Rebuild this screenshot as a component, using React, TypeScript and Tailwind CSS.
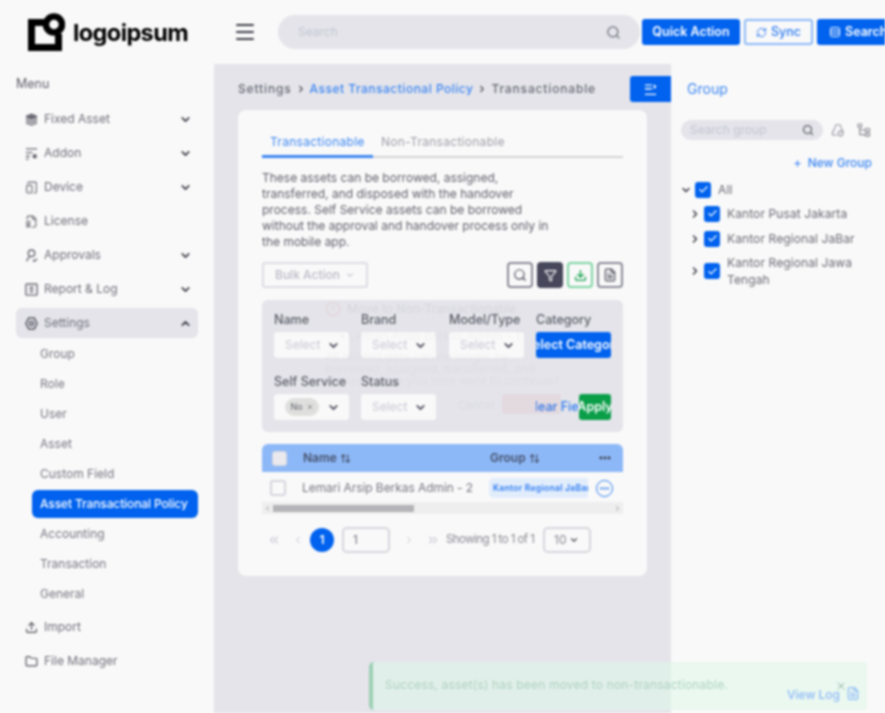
import React from 'react';
import {
  ChevronDown, ChevronUp, ChevronRight, ChevronLeft, ChevronsLeft, ChevronsRight, Check, Search, Menu, RefreshCw,
  TabletSmartphone, FileBadge, Upload, Folder, Filter, Download, FileText,
  MoreHorizontal, X, Plus, ArrowUpDown, Rows3, CircleAlert,
} from 'lucide-react';

type IconProps = { className?: string };

const StackIcon = ({ className }: IconProps) => (
  <svg viewBox="0 0 14 14" className={className} fill="currentColor">
    <path d="M7 .5 13 3v2L7 7.5 1 5V3Z" />
    <path d="M1 6.2 7 8.8l6-2.6v2L7 10.8 1 8.2Z" />
    <path d="M1 9.4l6 2.6 6-2.6v1.8L7 13.7 1 11.2Z" />
  </svg>
);

const AddonIcon = ({ className }: IconProps) => (
  <svg viewBox="0 0 14 14" className={className} fill="none" stroke="currentColor" strokeWidth="1.5">
    <path d="M1 2h12M1 6h7M1 10h4M1 13h3" />
    <circle cx="10.5" cy="10" r="2.4" fill="currentColor" stroke="none" />
  </svg>
);

const ApprovalIcon = ({ className }: IconProps) => (
  <svg viewBox="0 0 14 14" className={className} fill="none" stroke="currentColor" strokeWidth="1.5">
    <circle cx="7" cy="4.5" r="3.5" />
    <path d="M5 8 1.5 13M8.5 12l1.5 1.2L13 10.5" />
  </svg>
);

const ReportIcon = ({ className }: IconProps) => (
  <svg viewBox="0 0 14 14" className={className} fill="none" stroke="currentColor" strokeWidth="1.5">
    <rect x="1" y="1" width="12" height="12" rx="1" />
    <path d="M5 4.5h4M5 7h4M5 9.5h4" />
  </svg>
);

const GearIcon = ({ className }: IconProps) => (
  <svg viewBox="0 0 14 14" className={className} fill="none" stroke="currentColor" strokeWidth="1.6">
    <path d="M4 1.2h6L13 7l-3 5.8H4L1 7Z" />
    <circle cx="7" cy="7" r="2.2" />
  </svg>
);

const UnfoldIcon = ({ className }: IconProps) => (
  <svg viewBox="0 0 14 14" className={className} fill="none" stroke="currentColor" strokeWidth="1.2">
    <path d="M7 1.5a3 3 0 0 1 3 3M7 1.5a3 3 0 0 0-3 3M4 5 1.5 9.5V12H6M10 5l2.5 4.5" />
    <circle cx="9.5" cy="10.5" r="2.3" />
  </svg>
);

const TreeIcon = ({ className }: IconProps) => (
  <svg viewBox="0 0 14 14" className={className} fill="none" stroke="currentColor" strokeWidth="1.2">
    <rect x="1" y="1" width="3.6" height="3" rx=".6" />
    <rect x="8.5" y="5.5" width="4" height="3" rx=".6" />
    <rect x="8.5" y="10.2" width="4" height="3" rx=".6" />
    <path d="M2.8 4v7.7h5.7M2.8 7h5.7" />
  </svg>
);

const CollapseIcon = ({ className }: IconProps) => (
  <svg viewBox="0 0 14 14" className={className} fill="currentColor">
    <path d="M1 1.5h7.5V3H1ZM1 5.5h7.5V7H1ZM1 11.5h12V13H1Z" />
    <path d="M10.5 1.2 13.5 4l-3 2.8Z" />
  </svg>
);

const menuTop = [
  { label: 'Fixed Asset', icon: StackIcon, chevron: true },
  { label: 'Addon', icon: AddonIcon, chevron: true },
  { label: 'Device', icon: TabletSmartphone, chevron: true },
  { label: 'License', icon: FileBadge },
  { label: 'Approvals', icon: ApprovalIcon, chevron: true },
  { label: 'Report & Log', icon: ReportIcon, chevron: true },
];

const subMenu = ['Group', 'Role', 'User', 'Asset', 'Custom Field', 'Asset Transactional Policy', 'Accounting', 'Transaction', 'General'];

const Logo = () => (
  <div className="flex items-center gap-[8px]">
    <svg width="37" height="38" viewBox="0 0 37 38" fill="none">
      <path d="M0 6H18V13H7V31H27V21H34V38H0Z" fill="#000" />
      <circle cx="26" cy="11.5" r="8" stroke="#000" strokeWidth="6.5" />
    </svg>
    <span className="mt-[3px] text-[23.5px] font-bold tracking-[-0.6px] text-black leading-none">logoipsum</span>
  </div>
);

const SelectBox = ({ children }: { children?: React.ReactNode }) => (
  <div className="w-[75px] h-[26px] bg-[#f9f9f9] rounded-[3px] flex items-center justify-end pr-[9px] relative">
    {children ?? <span className="absolute left-[11px] text-[12px] text-[#c9c9d6]">Select</span>}
    <ChevronDown className="w-[13px] h-[13px] text-[#4a4a5a]" strokeWidth={3} />
  </div>
);

const Field = ({ label, width, children }: { label: string; width: string; children?: React.ReactNode }) => (
  <div className={`${width} flex flex-col gap-[2px]`}>
    <div className="text-[12.5px] leading-[20px] text-[#5b5b66] font-medium whitespace-nowrap">{label}</div>
    {children ?? <SelectBox />}
  </div>
);

const TreeRow = ({ label, open, indent }: { label: string; open?: boolean; indent?: boolean }) => (
  <div className={`flex items-center ${indent ? 'pl-[18px]' : 'pl-[9px]'}`}>
    {open ? (
      <ChevronDown className="w-[12px] h-[12px] text-[#3c3c48] shrink-0" strokeWidth={3} />
    ) : (
      <ChevronRight className="w-[12px] h-[12px] text-[#3c3c48] shrink-0" strokeWidth={3} />
    )}
    <div className="ml-[3px] w-[16px] h-[16px] rounded-[3px] bg-[#0062ee] flex items-center justify-center shrink-0">
      <Check className="w-[11px] h-[11px] text-white" strokeWidth={2.5} />
    </div>
    <span className="ml-[7px] text-[12px] leading-[17px] text-[#6a6a74] tracking-[0.1px] w-[132px]">{label}</span>
  </div>
);

export default function App() {
  return (
    <div className="w-[885px] h-[713px] overflow-hidden bg-[#f9f9f9]">
      <div className="relative w-[885px] h-[713px] overflow-hidden bg-[#f9f9f9] blur-[0.9px] font-['Inter',sans-serif]">
        {/* header */}
        <header className="h-[64px] flex items-center">
          <div className="w-[235px] pl-[28px] shrink-0 -mt-[1px]">
            <Logo />
          </div>
          <Menu className="w-[24px] h-[24px] -ml-[2px] text-[#3c3c48] shrink-0" strokeWidth={2} />
          <div className="ml-[21px] w-[362px] h-[34px] rounded-full bg-[#e4e4ea] flex items-center justify-between pl-[20px] pr-[19px] shrink-0">
            <span className="text-[12px] text-[#c5c5d2]">Search</span>
            <Search className="w-[15px] h-[15px] text-[#6b6b78]" />
          </div>
          <button className="ml-[2px] w-[98px] h-[26px] rounded-[3px] bg-[#0062ee] text-white text-[12.5px] font-semibold shrink-0">Quick Action</button>
          <button className="ml-[4px] w-[69px] h-[26px] rounded-[3px] border-2 border-[#8db8f7] text-[#2a7af0] text-[12.5px] font-medium flex items-center justify-center gap-[4px] shrink-0">
            <RefreshCw className="w-[11px] h-[11px]" />
            Sync
          </button>
          <button className="ml-[4px] w-[90px] h-[26px] rounded-[3px] bg-[#0062ee] text-white text-[12.5px] font-semibold flex items-center pl-[12px] gap-[4px] shrink-0">
            <Rows3 className="w-[12px] h-[12px]" />
            Search
          </button>
        </header>

        <div className="flex h-[649px]">
          {/* sidebar */}
          <aside className="w-[214px] shrink-0 pl-[16px] pr-[16px] pt-[12px]">
            <div className="text-[12.5px] leading-[16px] text-[#5f5f6a] mb-[10px]">Menu</div>
            {menuTop.map((item) => (
              <div key={item.label} className="h-[34px] flex items-center pl-[9px] pr-[6px] text-[#70707b]">
                <item.icon className="w-[13px] h-[13px] text-[#6a6a74]" />
                <span className="ml-[6px] text-[12px] flex-1">{item.label}</span>
                {item.chevron && <ChevronDown className="w-[13px] h-[13px] text-[#3c3c48]" strokeWidth={3} />}
              </div>
            ))}
            <div className="h-[30px] mt-[2px] rounded-[6px] bg-[#e4e4ea] flex items-center pl-[9px] pr-[6px] text-[#70707b]">
              <GearIcon className="w-[13px] h-[13px] text-[#5a5a66]" />
              <span className="ml-[6px] text-[12px] flex-1">Settings</span>
              <ChevronUp className="w-[13px] h-[13px] text-[#3c3c48]" strokeWidth={3} />
            </div>
            <div className="ml-[16px] mt-[1px] mb-[1px]">
              {subMenu.map((s) => {
                const active = s === 'Asset Transactional Policy';
                return (
                  <div
                    key={s}
                    className={`flex items-center pl-[8px] whitespace-nowrap text-[12px] ${
                      active ? 'h-[28px] my-[1px] rounded-[6px] bg-[#0062ee] text-white font-medium tracking-[-0.12px]' : 'h-[30px] text-[#777782]'
                    }`}
                  >
                    {s}
                  </div>
                );
              })}
            </div>
            {[{ label: 'Import', icon: Upload }, { label: 'File Manager', icon: Folder }].map((item) => (
              <div key={item.label} className="h-[34px] flex items-center pl-[9px] text-[#70707b]">
                <item.icon className="w-[13px] h-[13px] text-[#55555f]" strokeWidth={2.2} />
                <span className="ml-[6px] text-[12px]">{item.label}</span>
              </div>
            ))}
          </aside>

          {/* main */}
          <main className="w-[457px] shrink-0 bg-[#e4e4ea] pl-[24px] pr-[24px] pt-[12px] relative">
            <div className="h-[26px] flex items-center text-[12px] font-medium tracking-[0.85px] text-[#686874] whitespace-nowrap">
              Settings
              <ChevronRight className="w-[10px] h-[10px] mx-[4px] text-[#55555f]" strokeWidth={3} />
              <span className="text-[#3c86f2] tracking-[0.5px]">Asset Transactional Policy</span>
              <ChevronRight className="w-[10px] h-[10px] mx-[4px] text-[#55555f]" strokeWidth={3} />
              Transactionable
            </div>
            <div className="absolute right-0 top-[12px] w-[41px] h-[26px] bg-[#0062ee] rounded-l-[3px] flex items-center justify-center">
              <CollapseIcon className="w-[13px] h-[13px] text-white" />
            </div>

            <section className="mt-[8px] h-[466px] rounded-[8px] bg-[#f9f9f9] px-[24px] pt-[16px]">
              <div className="flex h-[32px] border-b-2 border-[#d4d4d8] text-[12px] tracking-[0.28px]">
                <div className="w-[111px] h-[32px] border-b-[3px] border-[#3c86f2] text-[#3c86f2] pl-[8px] pt-[7px]">Transactionable</div>
                <div className="pl-[8px] pt-[7px] text-[#9e9ea8]">Non-Transactionable</div>
              </div>

              <p className="mt-[12px] w-[288px] text-[12px] leading-[16px] text-[#61616c]">
                These assets can be borrowed, assigned, transferred, and disposed with the handover process. Self Service assets can be borrowed without the approval and handover process only in the mobile app.
              </p>

              <div className="mt-[12px] flex items-center justify-between">
                <button className="w-[106px] h-[26px] rounded-[3px] border-2 border-[#dcdce4] text-[#b9b9c6] text-[12px] font-medium flex items-center justify-center gap-[5px]">
                  Bulk Action
                  <ChevronDown className="w-[10px] h-[10px]" strokeWidth={2.5} />
                </button>
                <div className="flex gap-[4px]">
                  <div className="w-[26px] h-[26px] rounded-[4px] border-2 border-[#8a8a98] flex items-center justify-center">
                    <Search className="w-[14px] h-[14px] text-[#4a4a5a]" />
                  </div>
                  <div className="w-[26px] h-[26px] rounded-[4px] bg-[#47475c] flex items-center justify-center">
                    <Filter className="w-[13px] h-[13px] text-white" />
                  </div>
                  <div className="w-[26px] h-[26px] rounded-[4px] border-2 border-[#7ed3a3] flex items-center justify-center">
                    <Download className="w-[13px] h-[13px] text-[#14a04f]" strokeWidth={2.5} />
                  </div>
                  <div className="w-[26px] h-[26px] rounded-[4px] border-2 border-[#8a8a98] flex items-center justify-center">
                    <FileText className="w-[14px] h-[14px] text-[#4a4a5a]" />
                  </div>
                </div>
              </div>

              {/* filter panel */}
              <div className="mt-[12px] h-[132px] rounded-[6px] bg-[#e4e4ea] px-[12px] pt-[10px]">
                <div className="flex">
                  <Field label="Name" width="w-[87px]" />
                  <Field label="Brand" width="w-[88px]" />
                  <Field label="Model/Type" width="w-[87px]" />
                  <div className="w-[75px] flex flex-col gap-[2px]">
                    <div className="text-[12.5px] leading-[20px] text-[#5b5b66] font-medium">Category</div>
                    <div className="h-[26px] rounded-[3px] bg-[#0062ee] text-white text-[12.5px] font-semibold overflow-hidden flex justify-center items-center whitespace-nowrap">
                      Select Category
                    </div>
                  </div>
                </div>
                <div className="flex mt-[14px]">
                  <Field label="Self Service" width="w-[87px]">
                    <SelectBox>
                      <span className="absolute left-[11px] w-[34px] h-[18px] rounded-full bg-[#dfe0de] flex items-center justify-center gap-[3px] text-[9px] text-[#5f5f68]">
                        No
                        <X className="w-[8px] h-[8px]" />
                      </span>
                    </SelectBox>
                  </Field>
                  <Field label="Status" width="w-[88px]" />
                  <div className="w-[87px]" />
                  <div className="w-[75px] flex items-end">
                    <div className="w-[43px] h-[26px] overflow-hidden flex items-center justify-center whitespace-nowrap text-[12.5px] font-medium text-[#2a7af0] shrink-0">
                      Clear Field
                    </div>
                    <div className="w-[32px] h-[26px] rounded-[3px] bg-[#0b9e49] text-white text-[12.5px] font-semibold overflow-hidden flex items-center justify-center shrink-0">
                      Apply
                    </div>
                  </div>
                </div>
              </div>

              {/* table */}
              <div className="mt-[12px]">
                <div className="h-[28px] rounded-t-[6px] bg-[#8db8f7] flex items-center text-[12px] font-semibold text-[#45506a]">
                  <div className="ml-[10px] w-[15px] h-[15px] rounded-[3px] bg-[#e9e9ee] border border-[#d5d5de]" />
                  <div className="ml-[16px] w-[187px] flex items-center gap-[3px]">
                    Name
                    <ArrowUpDown className="w-[11px] h-[11px]" strokeWidth={2.5} />
                  </div>
                  <div className="flex-1 flex items-center gap-[3px]">
                    Group
                    <ArrowUpDown className="w-[11px] h-[11px]" strokeWidth={2.5} />
                  </div>
                  <MoreHorizontal className="mr-[11px] w-[14px] h-[14px] text-[#3c3c48]" strokeWidth={3} />
                </div>
                <div className="h-[30px] pt-[2px] flex items-center">
                  <div className="ml-[8px] w-[16px] h-[16px] rounded-[3px] border-2 border-[#d5d5de]" />
                  <div className="ml-[16px] w-[187px] text-[12px] tracking-[-0.07px] text-[#777782] whitespace-nowrap">Lemari Arsip Berkas Admin - 2</div>
                  <div className="w-[99px] h-[20px] rounded-l-[5px] bg-[#e2edfc] overflow-hidden flex items-center pl-[4px] text-[8.5px] font-semibold text-[#2a7af0] tracking-[0.3px] whitespace-nowrap">
                    Kantor Regional JaBar
                  </div>
                  <div className="ml-[8px] w-[17px] h-[17px] rounded-full border-[1.5px] border-[#2a7af0] flex items-center justify-center">
                    <MoreHorizontal className="w-[11px] h-[11px] text-[#2a7af0]" strokeWidth={3} />
                  </div>
                </div>
                <div className="h-[12px] bg-[#eeeeee] flex items-center justify-between px-[2px]">
                  <ChevronLeft className="w-[7px] h-[7px] text-[#8a8a94]" strokeWidth={3} />
                  <div className="w-[141px] h-[7px] bg-[#b4b4b8] mr-auto ml-[2px]" />
                  <ChevronRight className="w-[7px] h-[7px] text-[#8a8a94]" strokeWidth={3} />
                </div>
              </div>

              {/* pagination */}
              <div className="mt-[13px] flex items-center text-[#c8c8d4]">
                <ChevronsLeft className="w-[14px] h-[14px] ml-[5px]" />
                <ChevronLeft className="w-[12px] h-[12px] ml-[11px]" />
                <div className="ml-[6px] w-[24px] h-[24px] rounded-full bg-[#0062ee] text-white text-[12px] font-semibold flex items-center justify-center">1</div>
                <div className="ml-[8px] w-[48px] h-[26px] rounded-[5px] border-2 border-[#d5d5de] text-[12px] text-[#777782] flex items-center pl-[9px]">1</div>
                <ChevronRight className="w-[12px] h-[12px] ml-[13px]" />
                <ChevronsRight className="w-[14px] h-[14px] ml-[11px]" />
                <span className="ml-[6px] w-[89px] text-[11.5px] tracking-[-0.55px] text-[#8a8a94] whitespace-nowrap">Showing 1 to 1 of 1</span>
                <div className="ml-[8px] w-[48px] h-[26px] rounded-[5px] border-2 border-[#d5d5de] text-[12px] text-[#8a8a94] flex items-center pl-[9px] gap-[3px]">
                  10
                  <ChevronDown className="w-[10px] h-[10px] text-[#55555f]" strokeWidth={3} />
                </div>
              </div>
            </section>

            {/* modal fading out */}
            <div className="absolute left-[111px] top-[236px] w-[235px] text-[12px] text-[#4a4a5a]">
              <div className="flex items-center gap-[6px] opacity-[0.08]">
                <CircleAlert className="w-[16px] h-[16px] text-[#e03131]" />
                <span className="font-medium">Move to Non-Transactionable</span>
              </div>
              <div className="mt-[9px] pl-[14px] opacity-[0.04]">• Lemari Arsip Berkas Admin - 1</div>
              <p className="mt-[6px] leading-[12px] opacity-[0.04]">All related data can no longer be borrowed, assigned, transferred, and disposed. Are you sure want to continue?</p>
              <span className="absolute left-[133px] top-[97px] text-[11px] opacity-[0.06]">Cancel</span>
              <div className="absolute left-[177px] top-[94px] w-[59px] h-[20px] rounded-[3px] bg-[#e03131] opacity-[0.05]" />
            </div>
          </main>

          {/* right panel */}
          <aside className="flex-1 pt-[12px]">
            <div className="pl-[16px] h-[25px] flex items-center text-[14px] text-[#3c86f2]">Group</div>
            <div className="mt-[19px] pl-[10px] flex items-center">
              <div className="w-[142px] h-[20px] rounded-full bg-[#e4e4ea] flex items-center justify-between px-[9px]">
                <span className="text-[12px] text-[#c5c5d2]">Search group</span>
                <Search className="w-[12px] h-[12px] text-[#5f5f6a]" strokeWidth={2.5} />
              </div>
              <UnfoldIcon className="ml-[8px] w-[14px] h-[14px] text-[#9a9aa4]" />
              <TreeIcon className="ml-[12px] w-[14px] h-[14px] text-[#8a8a94]" />
            </div>
            <div className="mt-[14px] pr-[13px] flex items-center justify-end gap-[6px] text-[12px] font-medium text-[#3c86f2]">
              <Plus className="w-[9px] h-[9px]" strokeWidth={3} />
              New Group
            </div>
            <div className="mt-[9px] flex flex-col gap-[7px]">
              <TreeRow label="All" open />
              <TreeRow label="Kantor Pusat Jakarta" indent />
              <div className="mt-[1px] flex flex-col gap-[7px]">
                <TreeRow label="Kantor Regional JaBar" indent />
                <TreeRow label="Kantor Regional Jawa Tengah" indent />
              </div>
            </div>
          </aside>
        </div>

        {/* toast */}
        <div className="absolute left-[369px] top-[662px] w-[498px] h-[48px] rounded-l-[5px] rounded-r-[3px] border-l-[4px] border-[#9cd0b5] bg-[#dff7ea]/60 pl-[12px] pt-[14px]">
          <span className="block leading-[18px] text-[12px] tracking-[0.18px] text-[#aed2c1]">Success, asset(s) has been moved to non-transactionable.</span>
          <X className="absolute left-[462px] top-[18px] w-[12px] h-[12px] text-[#8db5a4]" />
          <span className="absolute left-[414px] top-[24px] text-[12px] font-medium text-[#8db8f7]">View Log</span>
          <FileText className="absolute left-[473px] top-[24px] w-[14px] h-[15px] text-[#8db8f7]" />
        </div>
      </div>
    </div>
  );
}
